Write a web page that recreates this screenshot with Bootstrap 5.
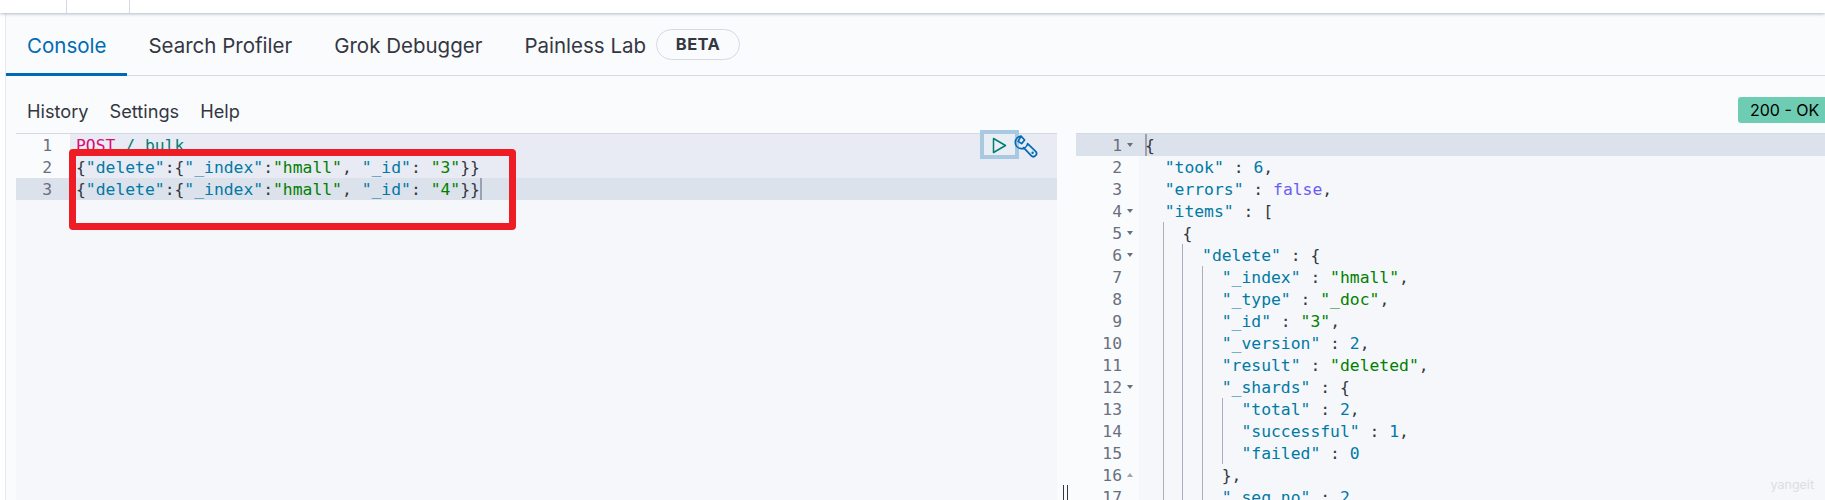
<!doctype html>
<html lang="en">
<head>
<meta charset="utf-8">
<title>Console</title>
<link href="https://cdn.jsdelivr.net/npm/bootstrap@5.3.0/dist/css/bootstrap.min.css" rel="stylesheet">
<style>
html,body{height:500px;overflow:hidden}
body{background:#fafbfd;font-family:Inter,"Noto Sans",sans-serif;color:#343741}
.topstrip{height:13px;background:#fff;box-shadow:0 1px 3px rgba(90,105,135,.45);position:relative;z-index:3}
.topcell{width:63px;height:13px;border-right:1px solid #d3dae6}
.topcell:first-child{width:67px}
.siderail{width:6px;background:#fff;border-right:1px solid #e6e9f0;flex:none}
.tabrow{height:63px;border-bottom:1px solid #d3dae6}
.tabitem{padding:0 21px;height:63px;font-size:20.5px;line-height:66px;color:#343741;text-decoration:none}
.tabitem.on{color:#006bb4;border-bottom:3px solid #006bb4}
.tabitem.last{padding-right:10px}
.betapill{width:84px;height:31px;border:1px solid #d3dae6;border-radius:16px;font-size:16.5px;font-weight:700;letter-spacing:.4px;line-height:29px;text-align:center}
.menurow{height:57px;padding-left:21px;padding-top:15px}
.menurow a{color:#343741;text-decoration:none;font-size:18.2px;margin-right:21px}
.statuspill{background:#6dccb1;color:#000;font-size:16px;height:26px;line-height:26px;width:87px;padding-left:12px;border-radius:3px 0 0 3px;margin-bottom:5px}
.workarea{height:367px}
.paneleft{margin-left:10px;width:1041px;flex:none;position:relative}
.paneright{flex:1 1 auto;min-width:0;position:relative}
.panegap{width:19px;flex:none}
.gripper{width:5px;height:15px;margin:352px 0 0 6px;border-left:1px solid #343741;border-right:1px solid #343741}
.codepane{height:367px;overflow:hidden;background:#f5f7fa;border-top:1px solid #d3dae6;font-family:"DejaVu Sans Mono","Liberation Mono",monospace;font-size:16.36px;line-height:22px}
.coderow{height:22px}
.gut{flex:none;background:#fafbfd;color:#69707d;text-align:right;position:relative;padding-top:1px}
.paneleft .gut{width:54px;padding-right:18px}
.paneright .gut{width:63px;padding-right:17px}
.txt{flex:1 1 auto;padding:1px 0 0 6px;position:relative;color:#343741;white-space:pre}
.blockbg .txt{background:#e8ebf3}
.activeline .txt,.activeline .gut{background:#dce2eb}
.fold{position:absolute;right:6px;top:9px;width:0;height:0;border-left:3px solid transparent;border-right:3px solid transparent;border-top:4px solid #69707d}
.fold.up{border-top:0;border-bottom:4px solid #a0a5ae}
.caretbar{display:inline-block;width:2px;height:22px;margin-top:-1px;background:#98a2b3;vertical-align:top}
.caretbar.zero{margin-right:-2px}
.ind{display:inline-block;width:2ch;height:22px;margin-top:-1px;vertical-align:top}
.ind:first-child{margin-left:-2px}
.ind.gd{border-left:1px solid #a9b0bc}
.k{color:#0079a5}.s{color:#008000}.n{color:#0079a5}.b{color:#6a5cf5}.m{color:#dd0a73}.u{color:#017d73}
.redframe{position:absolute;left:52.5px;top:16px;width:447px;height:81px;border:7px solid #ee1c25;border-radius:4px;z-index:2}
.runfocus{position:absolute;left:964px;top:-3px;width:39px;height:29px;border:4px solid #a9c8e2;background:#e9edf4;z-index:2}
.runfocus svg{display:block;margin:3px 0 0 8px}
.wrenchicon{position:absolute;left:998px;top:1px;z-index:2}
.markname{position:absolute;right:11px;bottom:5px;font-size:12.5px;color:#dcdde3;z-index:2;font-family:Inter,sans-serif}
</style>
</head>
<body>
<div class="topstrip d-flex"><div class="topcell"></div><div class="topcell"></div></div>
<div class="d-flex">
<div class="siderail"></div>
<div class="flex-grow-1" style="min-width:0">
  <div class="tabrow d-flex align-items-center">
    <a class="tabitem on" href="#">Console</a>
    <a class="tabitem" href="#">Search Profiler</a>
    <a class="tabitem" href="#">Grok Debugger</a>
    <a class="tabitem last" href="#">Painless Lab</a>
    <span class="betapill">BETA</span>
  </div>
  <div class="menurow d-flex align-items-center">
    <a href="#">History</a><a href="#">Settings</a><a href="#">Help</a>
    <span class="statuspill ms-auto">200 - OK</span>
  </div>
  <div class="workarea d-flex">
    <div class="paneleft">
      <div class="codepane">
        <div class="coderow d-flex blockbg"><div class="gut">1</div><div class="txt"><span class="m">POST</span> <span class="u">/_bulk</span></div></div>
        <div class="coderow d-flex blockbg"><div class="gut">2</div><div class="txt">{<span class="k">"delete"</span>:{<span class="k">"_index"</span>:<span class="s">"hmall"</span>, <span class="k">"_id"</span>: <span class="s">"3"</span>}}</div></div>
        <div class="coderow d-flex activeline"><div class="gut">3</div><div class="txt">{<span class="k">"delete"</span>:{<span class="k">"_index"</span>:<span class="s">"hmall"</span>, <span class="k">"_id"</span>: <span class="s">"4"</span>}}<span class="caretbar"></span></div></div>
      </div>
      <div class="redframe"></div>
      <div class="runfocus"><svg width="15" height="17" viewBox="0 0 15 17"><path d="M1.5 1.5 L13.5 8.5 L1.5 15.5 Z" fill="none" stroke="#017d73" stroke-width="1.5" stroke-linejoin="round"/></svg></div>
      <svg class="wrenchicon" width="24" height="26" viewBox="0 0 24 26"><path d="M7 2.2 A6.2 6.2 0 1 0 13.6 9.6 L21.6 17.4 A2.9 2.9 0 0 1 17.2 21.6 L9.6 13.6 M4.2 7.4 L7 2.2 L10.6 6 L7.6 9.6 Z" fill="none" stroke="#006bb4" stroke-width="1.7" stroke-linejoin="round" stroke-linecap="round"/><circle cx="18.6" cy="18.8" r="1.2" fill="#006bb4"/></svg>
    </div>
    <div class="panegap"><div class="gripper"></div></div>
    <div class="paneright">
      <div class="codepane">
        <div class="coderow d-flex activeline"><div class="gut">1<i class="fold"></i></div><div class="txt"><span class="caretbar zero"></span>{</div></div>
        <div class="coderow d-flex"><div class="gut">2</div><div class="txt">  <span class="k">"took"</span> : <span class="n">6</span>,</div></div>
        <div class="coderow d-flex"><div class="gut">3</div><div class="txt">  <span class="k">"errors"</span> : <span class="b">false</span>,</div></div>
        <div class="coderow d-flex"><div class="gut">4<i class="fold"></i></div><div class="txt">  <span class="k">"items"</span> : [</div></div>
        <div class="coderow d-flex"><div class="gut">5<i class="fold"></i></div><div class="txt"><span class="ind"></span><span class="ind gd"></span>{</div></div>
        <div class="coderow d-flex"><div class="gut">6<i class="fold"></i></div><div class="txt"><span class="ind"></span><span class="ind gd"></span><span class="ind gd"></span><span class="k">"delete"</span> : {</div></div>
        <div class="coderow d-flex"><div class="gut">7</div><div class="txt"><span class="ind"></span><span class="ind gd"></span><span class="ind gd"></span><span class="ind gd"></span><span class="k">"_index"</span> : <span class="s">"hmall"</span>,</div></div>
        <div class="coderow d-flex"><div class="gut">8</div><div class="txt"><span class="ind"></span><span class="ind gd"></span><span class="ind gd"></span><span class="ind gd"></span><span class="k">"_type"</span> : <span class="s">"_doc"</span>,</div></div>
        <div class="coderow d-flex"><div class="gut">9</div><div class="txt"><span class="ind"></span><span class="ind gd"></span><span class="ind gd"></span><span class="ind gd"></span><span class="k">"_id"</span> : <span class="s">"3"</span>,</div></div>
        <div class="coderow d-flex"><div class="gut">10</div><div class="txt"><span class="ind"></span><span class="ind gd"></span><span class="ind gd"></span><span class="ind gd"></span><span class="k">"_version"</span> : <span class="n">2</span>,</div></div>
        <div class="coderow d-flex"><div class="gut">11</div><div class="txt"><span class="ind"></span><span class="ind gd"></span><span class="ind gd"></span><span class="ind gd"></span><span class="k">"result"</span> : <span class="s">"deleted"</span>,</div></div>
        <div class="coderow d-flex"><div class="gut">12<i class="fold"></i></div><div class="txt"><span class="ind"></span><span class="ind gd"></span><span class="ind gd"></span><span class="ind gd"></span><span class="k">"_shards"</span> : {</div></div>
        <div class="coderow d-flex"><div class="gut">13</div><div class="txt"><span class="ind"></span><span class="ind gd"></span><span class="ind gd"></span><span class="ind gd"></span><span class="ind gd"></span><span class="k">"total"</span> : <span class="n">2</span>,</div></div>
        <div class="coderow d-flex"><div class="gut">14</div><div class="txt"><span class="ind"></span><span class="ind gd"></span><span class="ind gd"></span><span class="ind gd"></span><span class="ind gd"></span><span class="k">"successful"</span> : <span class="n">1</span>,</div></div>
        <div class="coderow d-flex"><div class="gut">15</div><div class="txt"><span class="ind"></span><span class="ind gd"></span><span class="ind gd"></span><span class="ind gd"></span><span class="ind gd"></span><span class="k">"failed"</span> : <span class="n">0</span></div></div>
        <div class="coderow d-flex"><div class="gut">16<i class="fold up"></i></div><div class="txt"><span class="ind"></span><span class="ind gd"></span><span class="ind gd"></span><span class="ind gd"></span>},</div></div>
        <div class="coderow d-flex"><div class="gut">17</div><div class="txt"><span class="ind"></span><span class="ind gd"></span><span class="ind gd"></span><span class="ind gd"></span><span class="k">"_seq_no"</span> : <span class="n">2</span>,</div></div>
      </div>
      <span class="markname">yangeit</span>
    </div>
  </div>
</div>
</div>
</body>
</html>
